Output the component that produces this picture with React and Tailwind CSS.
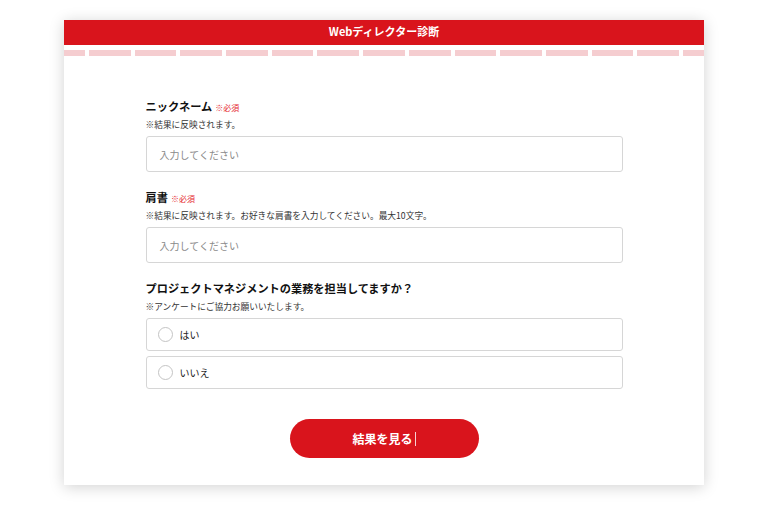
import React from 'react'

const font = { fontFamily: '"Noto Sans CJK JP", "Noto Sans", sans-serif' }

function Segments() {
  const items = Array.from({ length: 15 })
  return (
    <div className="mt-[5px] flex h-[6px] gap-[4px]">
      {items.map((_, i) => (
        <div
          key={i}
          className={`h-full bg-[#f5cdd0] ${i === 0 || i === 14 ? 'flex-[0.5]' : 'flex-1'}`}
        />
      ))}
    </div>
  )
}

function Label({ title, required, note }) {
  return (
    <div>
      <div className="flex h-[16px] items-center">
        <span className="text-[11.2px] font-bold leading-none text-[#111]">{title}</span>
        {required && (
          <span className="ml-[3px] mt-[2px] text-[8px] leading-none text-[#e5262e]">※必須</span>
        )}
      </div>
      <p className="mt-[4px] h-[12px] text-[8.7px] leading-[12px] text-[#333]">{note}</p>
    </div>
  )
}

function TextInput() {
  return (
    <div className="mt-[5px] flex h-[36px] items-center rounded-[3px] border border-[#d6d6d6] bg-white px-[13px]">
      <span className="text-[10px] text-[#8a8a8a]">入力してください</span>
    </div>
  )
}

function Radio({ label }) {
  return (
    <div className="flex h-[33px] items-center rounded-[3px] border border-[#d6d6d6] bg-white pl-[11px]">
      <span className="h-[15px] w-[15px] rounded-full border border-[#c4c4c4] bg-white" />
      <span className="ml-[7px] text-[10px] text-[#222]">{label}</span>
    </div>
  )
}

export default function App() {
  return (
    <div className="min-h-[518px] w-full bg-white pt-[20px]" style={font}>
      <div className="mx-auto w-[640px] bg-white pb-[27px] shadow-[0_2px_14px_rgba(0,0,0,0.18)]">
        <div className="flex h-[25px] items-center justify-center bg-[#d9141c] pb-[3px]">
          <h1 className="text-[11px] font-bold text-white">Webディレクター診断</h1>
        </div>
        <Segments />

        <div className="mx-auto mt-[43px] w-[477px]">
          <Label title="ニックネーム" required note="※結果に反映されます。" />
          <TextInput />

          <div className="mt-[18px]">
            <Label
              title="肩書"
              required
              note="※結果に反映されます。お好きな肩書を入力してください。最大10文字。"
            />
            <TextInput />
          </div>

          <div className="mt-[18px]">
            <Label title="プロジェクトマネジメントの業務を担当してますか？" note="※アンケートにご協力お願いいたします。" />
            <div className="mt-[5px] flex flex-col gap-[5px]">
              <Radio label="はい" />
              <Radio label="いいえ" />
            </div>
          </div>

          <div className="mt-[30px] flex justify-center">
            <button className="flex h-[39px] w-[189px] items-center justify-center rounded-full bg-[#d9141c] text-[12px] font-bold text-white">
              結果を見る
              <span className="ml-[2px] h-[14px] w-px bg-white/80" />
            </button>
          </div>
        </div>
      </div>
    </div>
  )
}
